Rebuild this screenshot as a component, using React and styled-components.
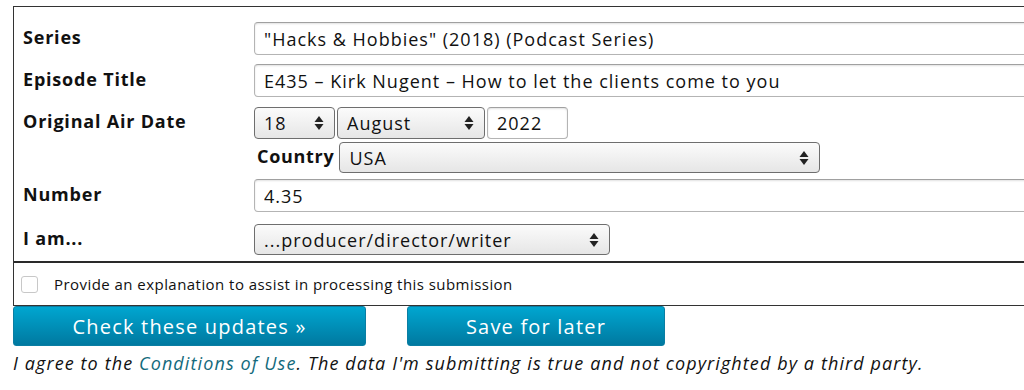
import styled, { createGlobalStyle } from "styled-components";

const GlobalStyle = createGlobalStyle`
  html, body {
    margin: 0;
    padding: 0;
    background: #fff;
    overflow: hidden;
  }
  body {
    font-family: "Open Sans", "Noto Sans", sans-serif;
    color: #111;
  }
`;

// select arrows, same on every dropdown
function UpDown() {
  return (
    <svg width="10" height="16" viewBox="0 0 10 16">
      <path d="M5 1 L9.5 7 L0.5 7 Z" fill="#222" />
      <path d="M5 15 L9.5 9 L0.5 9 Z" fill="#222" />
    </svg>
  );
}

export default function App() {
  return (
    <>
      <GlobalStyle />
      <Page>
        <Panel>
          <Fields>
            <Row>
              <Label>Series</Label>
              <TextInput readOnly defaultValue={'"Hacks & Hobbies" (2018) (Podcast Series)'} />
            </Row>
            <Row $gap="9px">
              <Label>Episode Title</Label>
              <TextInput
                readOnly
                defaultValue="E435 – Kirk Nugent – How to let the clients come to you"
              />
            </Row>
            <Row $top $gap="10px">
              <Label>Original Air Date</Label>
              <DateBlock>
                <DateLine>
                  <Select $width="81px" $height="32px">
                    <span>18</span>
                    <UpDown />
                  </Select>
                  <Select $width="148px" $height="32px">
                    <span>August</span>
                    <UpDown />
                  </Select>
                  <TextInput readOnly defaultValue="2022" $width="81px" $height="32px" />
                </DateLine>
                <CountryLine>
                  <SubLabel>Country</SubLabel>
                  <Select $width="481px" $height="31px">
                    <span>USA</span>
                    <UpDown />
                  </Select>
                </CountryLine>
              </DateBlock>
            </Row>
            <Row $gap="6px">
              <Label>Number</Label>
              <TextInput readOnly defaultValue="4.35" />
            </Row>
            <Row $gap="12px">
              <Label>I am...</Label>
              <Select $width="356px" $height="31px">
                <span>...producer/director/writer</span>
                <UpDown />
              </Select>
            </Row>
          </Fields>
          <CheckRow>
            <Box />
            <CheckText>Provide an explanation to assist in processing this submission</CheckText>
          </CheckRow>
        </Panel>
        <Buttons>
          <Button $width="353px">Check these updates »</Button>
          <Button $width="258px">Save for later</Button>
        </Buttons>
        <Agree>
          I agree to the <Link>Conditions of Use</Link>. The data I'm submitting is
          true and not copyrighted by a third party.
        </Agree>
      </Page>
    </>
  );
}

const Page = styled.div`
  padding: 6px 0 0 13px;
  width: 1060px;
`;

const Panel = styled.section`
  border: 1px solid #333;
  border-right: none;
`;

const Fields = styled.div`
  padding: 15px 0 6px 9px;
  display: flex;
  flex-direction: column;
`;

const Row = styled.div`
  display: grid;
  grid-template-columns: 231px 1fr;
  align-items: ${(p) => (p.$top ? "start" : "center")};
  margin-top: ${(p) => p.$gap || "10px"};
  &:first-child {
    margin-top: 0;
  }
`;

const Label = styled.div`
  font-weight: 700;
  font-size: 18px;
  letter-spacing: 0.8px;
  line-height: 28px;
  padding-bottom: 3px;
  color: #111;
`;

const TextInput = styled.input`
  box-sizing: border-box;
  width: ${(p) => p.$width || "100%"};
  height: ${(p) => p.$height || "33px"};
  margin: 0;
  padding: 0 9px;
  border: 1px solid #b4b4b4;
  border-top-color: #a0a0a0;
  border-radius: 4px;
  box-shadow: inset 0 1px 2px rgba(0, 0, 0, 0.12);
  font-family: "Open Sans", "Noto Sans", sans-serif;
  font-size: 18px;
  letter-spacing: 1px;
  color: #111;
  background: #fff;
  outline: none;
`;

const Select = styled.div`
  box-sizing: border-box;
  width: ${(p) => p.$width};
  height: ${(p) => p.$height || "33px"};
  display: flex;
  align-items: center;
  justify-content: space-between;
  padding: 0 10px 0 9px;
  border: 1px solid #6e6e6e;
  border-radius: 4px;
  background: linear-gradient(#fbfbfb, #e6e6e6);
  font-size: 18px;
  letter-spacing: 1px;
  color: #111;
`;

const DateBlock = styled.div`
  display: flex;
  flex-direction: column;
  gap: 3px;
`;

const DateLine = styled.div`
  display: flex;
  gap: 2px;
`;

const CountryLine = styled.div`
  display: flex;
  align-items: center;
  gap: 5px;
  padding-left: 3px;
`;

const SubLabel = styled.span`
  font-weight: 700;
  font-size: 18px;
  letter-spacing: 0.7px;
  padding-bottom: 4px;
`;

const CheckRow = styled.div`
  border-top: 2px solid #2a2a2a;
  height: 42px;
  display: flex;
  align-items: center;
  padding-left: 7px;
  gap: 16px;
`;

const Box = styled.span`
  box-sizing: border-box;
  width: 17px;
  height: 17px;
  border: 1px solid #c8c8c8;
  border-radius: 3px;
  background: #fff;
`;

const CheckText = styled.span`
  font-size: 15px;
  letter-spacing: 0.45px;
  color: #111;
`;

const Buttons = styled.div`
  display: flex;
  gap: 41px;
`;

const Button = styled.button`
  box-sizing: border-box;
  width: ${(p) => p.$width};
  height: 40px;
  margin: 0;
  border: 1px solid #0a7ea3;
  border-radius: 3px;
  background: linear-gradient(#00a6d0, #0079a0);
  color: #fff;
  font-family: "Open Sans", "Noto Sans", sans-serif;
  font-size: 20px;
  letter-spacing: 1.2px;
`;

const Agree = styled.p`
  margin: 5px 0 0;
  font-style: italic;
  font-size: 18px;
  letter-spacing: 1.1px;
  color: #111;
`;

const Link = styled.span`
  color: #136a7c;
`;
